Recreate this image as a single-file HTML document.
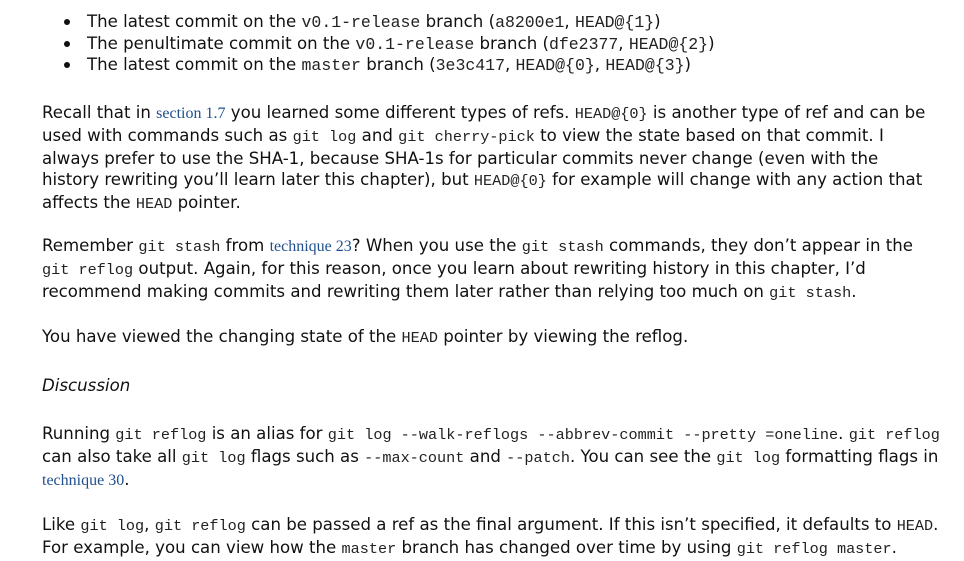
<!DOCTYPE html>
<html><head><meta charset="utf-8"><style>
body{margin:0;width:964px;height:561px;background:#fff;position:relative;overflow:hidden;font-family:"DejaVu Sans","Liberation Sans",sans-serif;font-size:16.6px;color:#111;}
.b{position:absolute;left:42px;line-height:21px;white-space:nowrap;}
code{font-family:"Liberation Mono",monospace;font-size:15.2px;color:#222;}
a{font-family:"Liberation Serif",serif;color:#1f4f8f;text-decoration:none;font-size:16px;}
.li{position:absolute;left:87px;line-height:21.5px;white-space:nowrap;}
.li code{font-size:16.5px;}
.dot{position:absolute;left:64px;width:6px;height:6px;border-radius:50%;background:#111;}
</style></head><body>
<div class="dot" style="top:19px"></div>
<div class="dot" style="top:41px"></div>
<div class="dot" style="top:62px"></div>
<div class="li" style="top:11px">The latest commit on the <code>v0.1-release</code> branch (<code>a8200e1</code>, <code>HEAD@{1}</code>)</div>
<div class="li" style="top:33px">The penultimate commit on the <code>v0.1-release</code> branch (<code>dfe2377</code>, <code>HEAD@{2}</code>)</div>
<div class="li" style="top:54px">The latest commit on the <code>master</code> branch (<code>3e3c417</code>, <code>HEAD@{0}</code>, <code>HEAD@{3}</code>)</div>

<div class="b" style="top:102px">Recall that in <a>section 1.7</a> you learned some different types of refs. <code>HEAD@{0}</code> is another type of ref and can be<br>used with commands such as <code>git log</code> and <code>git cherry-pick</code> to view the state based on that commit. I<br>always prefer to use the SHA-1, because SHA-1s for particular commits never change (even with the<br>history rewriting you’ll learn later this chapter), but <code>HEAD@{0}</code> for example will change with any action that<br>affects the <code>HEAD</code> pointer.</div>

<div class="b" style="top:235px">Remember <code>git stash</code> from <a>technique 23</a>? When you use the <code>git stash</code> commands, they don’t appear in the<br><code>git reflog</code> output. Again, for this reason, once you learn about rewriting history in this chapter, I’d<br>recommend making commits and rewriting them later rather than relying too much on <code>git stash</code>.</div>

<div class="b" style="top:326px">You have viewed the changing state of the <code>HEAD</code> pointer by viewing the reflog.</div>

<div class="b" style="top:375px;font-style:italic">Discussion</div>

<div class="b" style="top:423px">Running <code>git reflog</code> is an alias for <code>git log --walk-reflogs --abbrev-commit --pretty =oneline</code>. <code>git reflog</code><br>can also take all <code>git log</code> flags such as <code>--max-count</code> and <code>--patch</code>. You can see the <code>git log</code> formatting flags in<br><a>technique 30</a>.</div>

<div class="b" style="top:514px">Like <code>git log</code>, <code>git reflog</code> can be passed a ref as the final argument. If this isn’t specified, it defaults to <code>HEAD</code>.<br>For example, you can view how the <code>master</code> branch has changed over time by using <code>git reflog master</code>.</div>
</body></html>
